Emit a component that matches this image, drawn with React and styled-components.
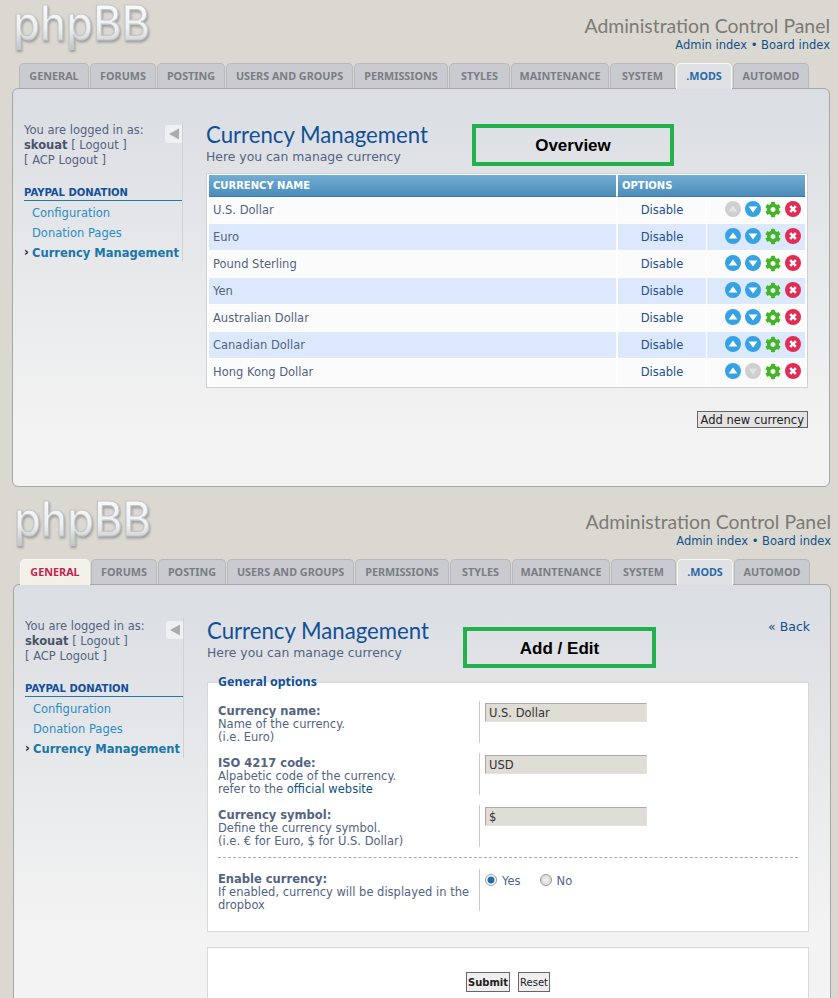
import React from 'react'
import styled, { createGlobalStyle } from 'styled-components'
import { FaCog } from 'react-icons/fa'

const tabs = [
    ['GENERAL', 71], ['FORUMS', 67], ['POSTING', 69], ['USERS AND GROUPS', 128], ['PERMISSIONS', 95],
    ['STYLES', 62], ['MAINTENANCE', 99], ['SYSTEM', 66], ['.MODS', 57], ['AUTOMOD', 77],
]

const currencies = ['U.S. Dollar', 'Euro', 'Pound Sterling', 'Yen', 'Australian Dollar', 'Canadian Dollar', 'Hong Kong Dollar']

function Logo() {
    return (
        <LogoSvg width="150" height="58" viewBox="0 0 150 58">
            <defs>
                <linearGradient id="logoFill" x1="0" y1="0" x2="0" y2="1">
                    <stop offset="0" stopColor="#ffffff" />
                    <stop offset="0.6" stopColor="#eeeff0" />
                    <stop offset="1" stopColor="#bcc0c4" />
                </linearGradient>
            </defs>
            <text x="1" y="40" fontFamily="Inter, sans-serif" fontWeight="500" fontSize="48" textLength="137"
                lengthAdjust="spacingAndGlyphs" fill="url(#logoFill)" stroke="#c4c7ca" strokeWidth="1.2">phpBB</text>
        </LogoSvg>
    )
}

function ArrowIcon({ down, off }) {
    return (
        <svg width="16" height="16" viewBox="0 0 16 16">
            <circle cx="8" cy="8" r="8" fill={off ? '#cfcfcf' : '#35a2e4'} />
            <path d={down ? 'M3.6 5.6h8.8L8 11.6z' : 'M3.6 10.6h8.8L8 4.6z'} fill={off ? '#e4e4e4' : '#fff'} />
        </svg>
    )
}

function DeleteIcon() {
    return (
        <svg width="16" height="16" viewBox="0 0 16 16">
            <circle cx="8" cy="8" r="8" fill="#e12d55" />
            <path d="M5.2 5.2l5.6 5.6M10.8 5.2l-5.6 5.6" stroke="#fff" strokeWidth="2.6" />
        </svg>
    )
}

function Header() {
    return (
        <Top>
            <Logo />
            <TopRight>
                <AcpTitle>Administration Control Panel</AcpTitle>
                <TopLinks>Admin index • Board index</TopLinks>
            </TopRight>
        </Top>
    )
}

function Tabs({ red }) {
    return (
        <TabRow>
            {tabs.map(([name, w]) => (
                <Tab key={name} $w={w} $active={name === '.MODS'} $red={red && name === 'GENERAL'}>{name}</Tab>
            ))}
        </TabRow>
    )
}

function Sidebar() {
    return (
        <Side>
            <Logged>
                You are logged in as:<br />
                <b>skouat</b> [ Logout ]<br />
                [ ACP Logout ]
            </Logged>
            <Collapse>
                <svg width="12" height="12" viewBox="0 0 12 12"><path d="M1 6l10-5.500v11z" fill="#a9abae" /></svg>
            </Collapse>
            <MenuTitle>PAYPAL DONATION</MenuTitle>
            <MenuItem>Configuration</MenuItem>
            <MenuItem>Donation Pages</MenuItem>
            <MenuItem $current>Currency Management</MenuItem>
        </Side>
    )
}

function Overview() {
    return (
        <>
            <Title>Currency Management</Title>
            <Sub>Here you can manage currency</Sub>
            <Note $left={266} $top={2} $w={202} $h={42}>Overview</Note>
            <Table>
                <thead>
                    <tr>
                        <Th>CURRENCY NAME</Th>
                        <Th colSpan="2">OPTIONS</Th>
                    </tr>
                </thead>
                <tbody>
                    {currencies.map((c, i) => (
                        <Row key={c} $alt={i % 2 === 1}>
                            <NameCell>{c}</NameCell>
                            <ToggleCell>Disable</ToggleCell>
                            <IconCell>
                                <Icons>
                                    <ArrowIcon off={i === 0} />
                                    <ArrowIcon down off={i === currencies.length - 1} />
                                    <Gear><FaCog size={17} /></Gear>
                                    <DeleteIcon />
                                </Icons>
                            </IconCell>
                        </Row>
                    ))}
                </tbody>
            </Table>
            <AddRow><AddBtn>Add new currency</AddBtn></AddRow>
        </>
    )
}

function FormRow({ label, lines, children }) {
    return (
        <Dl>
            <Dt>
                <b>{label}</b>
                {lines.map((l, i) => <div key={i}>{l}</div>)}
            </Dt>
            <Dd>{children}</Dd>
        </Dl>
    )
}

function Edit() {
    return (
        <>
            <Back>« Back</Back>
            <Title>Currency Management</Title>
            <Sub>Here you can manage currency</Sub>
            <Note $left={256} $top={9} $w={193} $h={41}>Add / Edit</Note>
            <Fieldset>
                <Legend>General options</Legend>
                <FormRow label="Currency name:" lines={['Name of the currency.', '(i.e. Euro)']}>
                    <Input defaultValue="U.S. Dollar" />
                </FormRow>
                <FormRow label="ISO 4217 code:" lines={['Alpabetic code of the currency.', <>refer to the <OffLink>official website</OffLink></>]}>
                    <Input defaultValue="USD" />
                </FormRow>
                <FormRow label="Currency symbol:" lines={['Define the currency symbol.', '(i.e. € for Euro, $ for U.S. Dollar)']}>
                    <Input defaultValue="$" />
                </FormRow>
                <Dash />
                <FormRow label="Enable currency:" lines={['If enabled, currency will be displayed in the dropbox']}>
                    <Radios>
                        <Radio $on /><RadioText>Yes</RadioText>
                        <Radio /><RadioText>No</RadioText>
                    </Radios>
                </FormRow>
            </Fieldset>
            <Submits>
                <SubmitBtn $bold>Submit</SubmitBtn>
                <SubmitBtn>Reset</SubmitBtn>
            </Submits>
        </>
    )
}

export default function App() {
    return (
        <Page>
            <GlobalStyle />
            <Screen $left={12}>
                <Header />
                <Tabs />
                <Panel $h={399}>
                    <Sidebar />
                    <Main><Overview /></Main>
                </Panel>
            </Screen>
            <Screen $left={13}>
                <Header />
                <Tabs red />
                <Panel $h={420}>
                    <Sidebar />
                    <Main><Edit /></Main>
                </Panel>
            </Screen>
        </Page>
    )
}

const GlobalStyle = createGlobalStyle`
    html, body {
        margin: 0;
        background: #dbd8d2;
        font-family: "DejaVu Sans", Verdana, sans-serif;
        font-size: 11.5px;
    }
`
const Page = styled.div`
    height: 998px;
    overflow: hidden;
    display: flex;
    flex-direction: column;
    gap: 9px;
`
const Screen = styled.section`
    padding-left: ${p => p.$left}px;
    width: 818px;
`
const Top = styled.header`
    height: 63px;
    display: flex;
    justify-content: space-between;
`
const LogoSvg = styled.svg`
    display: block;
    overflow: visible;
    filter: drop-shadow(1px 2px 1px rgba(110, 110, 110, 0.55));
`
const TopRight = styled.div`
    text-align: right;
    padding-top: 14px;
`
const AcpTitle = styled.div`
    font-family: Lato, sans-serif;
    font-size: 19.4px;
    line-height: 24px;
    color: #7c7a74;
`
const TopLinks = styled.div`
    line-height: 15px;
    color: #105289;
`
const TabRow = styled.nav`
    display: flex;
    gap: 1px;
    height: 25px;
    padding-left: 7px;
`
const Tab = styled.div`
    position: relative;
    z-index: 1;
    box-sizing: border-box;
    width: ${p => p.$w - 1}px;
    height: ${p => (p.$active || p.$red ? 26 : 25)}px;
    border: 1px solid ${p => (p.$active || p.$red ? '#f6f6f4' : '#b8b9bc')};
    border-bottom: none;
    border-radius: 5px 5px 0 0;
    background: ${p => (p.$active ? '#dfe1e5' : p.$red ? '#f2f0e9' : '#c9cbd1')};
    color: ${p => (p.$active ? '#2a6aa8' : p.$red ? '#c4234b' : '#7a7d83')};
    font-family: "Noto Sans", sans-serif;
    font-size: 10.8px;
    font-weight: 700;
    text-align: center;
    line-height: 24px;
    white-space: nowrap;
`
const Panel = styled.main`
    box-sizing: border-box;
    height: ${p => p.$h}px;
    width: 818px;
    display: flex;
    gap: 23px;
    padding: 33px 0 0 11px;
    border: 1px solid #a6a6a6;
    border-radius: 6px;
    background: linear-gradient(#dadde2, #f3f3f3 340px);
`
const Side = styled.aside`
    position: relative;
    box-sizing: border-box;
    width: 159px;
    height: 140px;
    border-right: 1px solid #cfd1d4;
`
const Logged = styled.div`
    padding-top: 1px;
    line-height: 15px;
    color: #536482;
    b {
        color: #4a5568;
    }
`
const Collapse = styled.div`
    position: absolute;
    top: 3px;
    right: 0;
    width: 17px;
    height: 18px;
    display: flex;
    align-items: center;
    justify-content: center;
    background: #eef0f2;
    border-radius: 3px 0 0 3px;
`
const MenuTitle = styled.div`
    margin: 18px 0 2px;
    padding-bottom: 1px;
    border-bottom: 1px solid #1f7ab0;
    font-size: 10px;
    font-weight: 700;
    line-height: 13px;
    color: #115098;
`
const MenuItem = styled.div`
    position: relative;
    padding-left: 8px;
    height: 20px;
    line-height: 20px;
    white-space: nowrap;
    font-weight: ${p => (p.$current ? 700 : 400)};
    color: ${p => (p.$current ? '#1a76a8' : '#2a8ec5')};
    &::before {
        content: '${p => (p.$current ? '›' : '')}';
        position: absolute;
        left: 0;
        top: -1px;
        font-weight: 700;
        color: #222;
    }
`
const Main = styled.div`
    position: relative;
    width: 602px;
`
const Title = styled.h1`
    margin: 0;
    font-family: Lato, sans-serif;
    font-size: 22.2px;
    font-weight: 400;
    line-height: 26px;
    color: #115098;
`
const Sub = styled.p`
    margin: 2px 0 0;
    font-size: 12.4px;
    line-height: 14px;
    color: #536482;
`
const Back = styled.div`
    position: absolute;
    right: -1px;
    top: 1px;
    font-size: 12.5px;
    color: #105289;
`
const Note = styled.div`
    position: absolute;
    left: ${p => p.$left}px;
    top: ${p => p.$top}px;
    box-sizing: border-box;
    width: ${p => p.$w}px;
    height: ${p => p.$h}px;
    border: 4px solid #22b14c;
    font-family: "Liberation Sans", sans-serif;
    font-size: 17px;
    font-weight: 700;
    line-height: 35px;
    text-align: center;
    color: #000;
`
const Table = styled.table`
    box-sizing: border-box;
    width: 602px;
    margin-top: 9px;
    border: 1px solid #cfd0d1;
    background: #fff;
    border-collapse: separate;
    border-spacing: 0;
    padding: 1px 2px;
`
const Th = styled.th`
    height: 21px;
    padding: 0 4px;
    text-align: left;
    font-size: 10px;
    font-weight: 700;
    color: #fff;
    background: linear-gradient(#71aed5, #4b8cba);
    border-bottom: 1px solid #3a7aa8;
    & + & {
        border-left: 2px solid #fff;
    }
`
const Row = styled.tr`
    background: ${p => (p.$alt ? '#dce9fc' : '#fbfbfb')};
    td {
        height: 26px;
        padding: 0 4px;
        border-bottom: 1px solid #fff;
    }
`
const NameCell = styled.td`
    width: 399px;
    color: #536482;
`
const ToggleCell = styled.td`
    width: 80px;
    text-align: center;
    color: #1d4f90;
    border-left: 2px solid #fff;
    border-right: 1px solid #fff;
`
const IconCell = styled.td``
const Icons = styled.div`
    display: flex;
    justify-content: flex-end;
    align-items: center;
    gap: 4px;
    margin-top: -2px;
`
const Gear = styled.span`
    display: flex;
    width: 16px;
    justify-content: center;
    color: #44b527;
`
const AddRow = styled.div`
    display: flex;
    justify-content: flex-end;
    margin-top: 23px;
`
const AddBtn = styled.button`
    height: 17px;
    padding: 0 3px;
    border: 1px solid #666;
    background: #e4e4e4;
    font-family: inherit;
    font-size: 11.5px;
    line-height: 14px;
    color: #222;
`
const Fieldset = styled.fieldset`
    box-sizing: border-box;
    width: 602px;
    height: 257px;
    margin: 15px 0 0;
    padding: 12px 10px 0;
    border: 1px solid #d7d8da;
    background: #fff;
`
const Legend = styled.legend`
    padding: 0;
    font-family: "Noto Sans", sans-serif;
    font-size: 12.500px;
    font-weight: 700;
    line-height: 14px;
    color: #115098;
`
const Dl = styled.div`
    display: flex;
    height: 42px;
    margin-bottom: 10px;
`
const Dt = styled.div`
    box-sizing: border-box;
    width: 262px;
    border-right: 1px solid #c9c9c9;
    padding: 4px 6px 0 0;
    line-height: 13px;
    color: #536482;
    b {
        display: block;
        color: #536482;
    }
`
const Dd = styled.div`
    padding: 2px 0 0 5px;
`
const OffLink = styled.span`
    color: #105289;
`
const Input = styled.input`
    box-sizing: border-box;
    display: block;
    width: 162px;
    height: 19px;
    padding: 0 3px;
    border: 1px solid #e4e0da;
    border-top-color: #a9a9a9;
    border-left-color: #a9a9a9;
    background: #e0dcd6;
    font-family: inherit;
    font-size: 11.5px;
    color: #333;
`
const Dash = styled.div`
    border-top: 1px dashed #a9a9a9;
    margin-bottom: 11px;
`
const Radios = styled.div`
    display: flex;
    align-items: center;
    height: 14px;
    padding-top: 2px;
`
const Radio = styled.span`
    box-sizing: border-box;
    width: 12px;
    height: 12px;
    border-radius: 50%;
    border: 1px solid #9a9a9a;
    background: ${p => (p.$on ? 'radial-gradient(circle, #1d6fa8 0 3px, #fff 4px)' : 'radial-gradient(circle, #f2f2f2, #d0d0d0)')};
`
const RadioText = styled.span`
    margin: 2px 19px 0 5px;
    color: #536482;
`
const Submits = styled.div`
    box-sizing: border-box;
    display: flex;
    justify-content: center;
    gap: 8px;
    width: 602px;
    height: 80px;
    margin-top: 15px;
    padding-top: 24px;
    border: 1px solid #d7d8da;
    background: #fff;
`
const SubmitBtn = styled.button`
    height: 20px;
    padding: 0 1px;
    border: 1px solid #666;
    background: #efefef;
    font-family: inherit;
    font-size: 10px;
    font-weight: ${p => (p.$bold ? 700 : 400)};
    color: #222;
`
